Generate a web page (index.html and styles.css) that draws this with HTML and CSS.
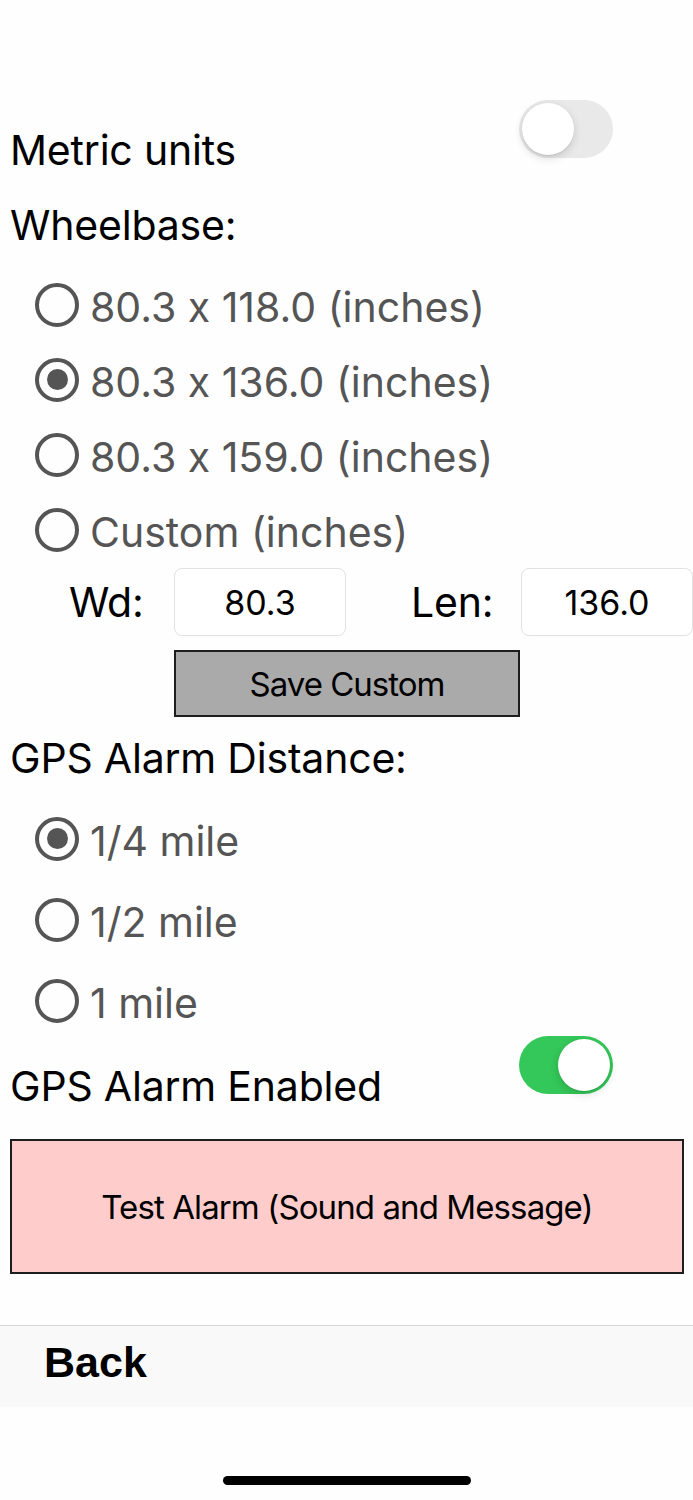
FILE: index.html
```html
<!DOCTYPE html>
<html lang="en">
<head>
<meta charset="utf-8">
<title>Settings</title>
<link rel="stylesheet" href="styles.css">
</head>
<body>
<div class="page">
  <main class="content">
    <div class="toggle-row first">
      <span class="label">Metric units</span>
      <span class="switch"><span class="knob"></span></span>
    </div>

    <div class="heading wheel">Wheelbase:</div>

    <ul class="radios wb">
      <li class="radio"><span class="dot"></span><span class="rtext">80.3 x 118.0 (inches)</span></li>
      <li class="radio"><span class="dot on"></span><span class="rtext">80.3 x 136.0 (inches)</span></li>
      <li class="radio"><span class="dot"></span><span class="rtext">80.3 x 159.0 (inches)</span></li>
      <li class="radio"><span class="dot"></span><span class="rtext">Custom (inches)</span></li>
    </ul>

    <div class="custom-row">
      <span class="flabel wd">Wd:</span>
      <span class="field">80.3</span>
      <span class="flabel len">Len:</span>
      <span class="field">136.0</span>
    </div>

    <div class="save-wrap"><button class="save">Save Custom</button></div>

    <div class="heading gps">GPS Alarm Distance:</div>

    <ul class="radios dist">
      <li class="radio"><span class="dot on"></span><span class="rtext">1/4 mile</span></li>
      <li class="radio"><span class="dot"></span><span class="rtext">1/2 mile</span></li>
      <li class="radio"><span class="dot"></span><span class="rtext">1 mile</span></li>
    </ul>

    <div class="toggle-row second">
      <span class="label">GPS Alarm Enabled</span>
      <span class="switch on"><span class="knob"></span></span>
    </div>

    <button class="test">Test Alarm (Sound and Message)</button>
  </main>

  <nav class="bottom-bar">
    <span class="back">Back</span>
  </nav>
  <div class="home-area"><span class="home-indicator"></span></div>
</div>
</body>
</html>
```

FILE: styles.css
```css
* { box-sizing: border-box; }

html, body {
  margin: 0;
  padding: 0;
  background: #fefefe;
}

body {
  font-family: "Inter", "Liberation Sans", sans-serif;
  font-feature-settings: "calt" 0;
  color: #000;
}

.page {
  width: 693px;
  height: 1500px;
  display: flex;
  flex-direction: column;
}

.content {
  padding-left: 10px;
  display: flex;
  flex-direction: column;
}

.label, .heading, .flabel {
  font-size: 41px;
  line-height: 48px;
  letter-spacing: -0.2px;
}

.toggle-row {
  display: flex;
  justify-content: space-between;
  align-items: flex-start;
  padding-right: 80px;
}
.toggle-row.first { margin-top: 100px; }
.toggle-row .label { margin-top: 26px; }

.switch {
  width: 94px;
  height: 58px;
  border-radius: 29px;
  background: #e9e9ea;
  position: relative;
  flex: none;
}
.switch .knob {
  position: absolute;
  top: 3px;
  left: 3px;
  width: 52px;
  height: 52px;
  border-radius: 50%;
  background: #fff;
  box-shadow: 0 3px 8px rgba(0,0,0,0.15), 0 1px 1px rgba(0,0,0,0.08);
}
.switch.on { background: #34c759; }
.switch.on .knob { left: 39px; }

.heading.wheel { margin-top: 27px; }

.radios {
  list-style: none;
  margin: 0;
  padding: 0 0 0 25px;
}
.radios.wb { margin-top: 18px; }
.radios.wb .radio { height: 75px; }
.radios.dist { margin-top: 16px; }
.radios.dist .radio { height: 81px; }

.radio {
  display: flex;
  align-items: center;
  gap: 11px;
}
.dot {
  width: 44px;
  height: 44px;
  border-radius: 50%;
  border: 4px solid #555;
  flex: none;
  display: flex;
  align-items: center;
  justify-content: center;
}
.dot.on::after {
  content: "";
  width: 21px;
  height: 21px;
  border-radius: 50%;
  background: #555;
}
.rtext {
  font-size: 41px;
  line-height: 48px;
  color: #555;
  padding-top: 4px;
  font-feature-settings: "calt" 0;
}

.custom-row {
  display: flex;
  align-items: center;
  height: 68px;
  margin-top: 1px;
  padding-left: 59px;
}
.flabel.wd { width: 105px; }
.flabel.len { width: 175px; padding-left: 65px; }
.field {
  width: 172px;
  height: 68px;
  border: 1px solid #e2e2e2;
  border-radius: 8px;
  background: #fff;
  display: flex;
  align-items: center;
  justify-content: center;
  font-size: 34px;
  flex: none;
}

.save-wrap {
  margin-top: 14px;
  padding-left: 164px;
}
.save {
  width: 346px;
  height: 67px;
  background: #aaaaaa;
  border: 2px solid #1e1e1e;
  border-radius: 0;
  font-family: "Inter", "Liberation Sans", sans-serif;
  font-size: 33px;
  letter-spacing: -1px;
  color: #000;
  padding: 0;
}

.heading.gps { margin-top: 17px; }

.toggle-row.second { margin-top: -5px; }

.test {
  margin-top: 29px;
  width: 674px;
  height: 135px;
  background: #ffcccc;
  border: 2px solid #1e1e1e;
  border-radius: 0;
  font-family: "Inter", "Liberation Sans", sans-serif;
  font-size: 33px;
  letter-spacing: -0.9px;
  color: #000;
  padding: 0;
}

.bottom-bar {
  margin-top: 51px;
  border-top: 1px solid #d8d8d8;
  background: #f9f9f9;
  height: 82px;
  padding-left: 44px;
  display: flex;
  align-items: flex-start;
}
.back {
  font-family: "Liberation Sans", sans-serif;
  font-weight: bold;
  font-size: 43px;
  line-height: 50px;
  margin-top: 11px;
}

.home-area {
  flex: 1;
  display: flex;
  justify-content: center;
}
.home-indicator {
  margin-top: 69px;
  width: 248px;
  height: 9px;
  border-radius: 5px;
  background: #000;
}
```
